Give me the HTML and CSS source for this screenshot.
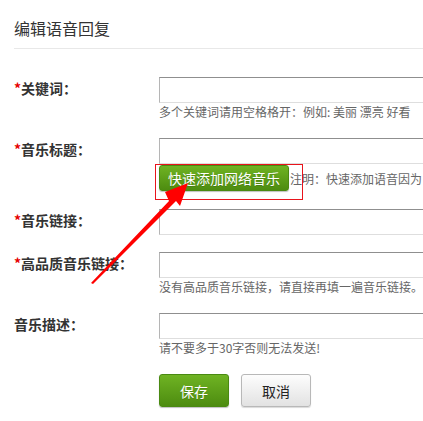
FILE: index.html
```html
<!DOCTYPE html>
<html lang="zh-CN">
<head>
<meta charset="utf-8">
<title>编辑语音回复</title>
<link rel="stylesheet" href="styles.css">
</head>
<body>
<div class="page">
  <h2 class="title">编辑语音回复</h2>
  <form class="form">
    <div class="row">
      <label class="label"><span class="req">*</span>关键词：</label>
      <div class="field">
        <input class="input" type="text">
        <p class="hint">多个关键词请用空格格开：例如: 美丽 漂亮 好看</p>
      </div>
    </div>
    <div class="row row-tools">
      <label class="label"><span class="req">*</span>音乐标题：</label>
      <div class="field">
        <input class="input" type="text">
        <div class="tools">
          <button type="button" class="btn btn-green btn-quick">快速添加网络音乐</button>
          <span class="note">注明：快速添加语音因为</span>
          <span class="mark"></span>
        </div>
      </div>
    </div>
    <div class="row">
      <label class="label"><span class="req">*</span>音乐链接：</label>
      <div class="field">
        <input class="input" type="text">
      </div>
    </div>
    <div class="row">
      <label class="label"><span class="req">*</span>高品质音乐链接：</label>
      <div class="field">
        <input class="input" type="text">
        <p class="hint">没有高品质音乐链接，请直接再填一遍音乐链接。</p>
      </div>
    </div>
    <div class="row">
      <label class="label">音乐描述：</label>
      <div class="field">
        <input class="input" type="text">
        <p class="hint">请不要多于30字否则无法发送!</p>
      </div>
    </div>
    <div class="row">
      <span class="label"></span>
      <div class="actions">
        <button type="button" class="btn btn-green btn-big">保存</button>
        <button type="button" class="btn btn-gray btn-big">取消</button>
      </div>
    </div>
  </form>
  <svg class="arrow" width="423" height="421" viewBox="0 0 423 421" aria-hidden="true">
    <polygon fill="#f00" points="91,283 169,201 165,192 188,183 180,206 176,201 93,284"/>
  </svg>
</div>
</body>
</html>
```

FILE: styles.css
```css
html, body {
  margin: 0;
  padding: 0;
  overflow: hidden;
  background: #fff;
}
body {
  font-family: "Noto Sans CJK SC", "Noto Sans", sans-serif;
  color: #333;
}
.page {
  position: relative;
  width: 423px;
  height: 421px;
  padding-left: 14px;
  box-sizing: border-box;
}
.title {
  margin: 0;
  padding-top: 16px;
  padding-bottom: 8px;
  font-size: 16px;
  line-height: 24px;
  font-weight: normal;
  color: #333;
  border-bottom: 1px solid #e8e8e8;
}
.form {
  margin-top: 28px;
}
.row {
  display: grid;
  grid-template-columns: 145px 1fr;
  margin-bottom: 17px;
}
.row-tools {
  margin-bottom: 18px;
}
.label {
  font-size: 14px;
  line-height: 22px;
  font-weight: bold;
  color: #333;
  white-space: nowrap;
}
.req {
  color: #e60000;
  font-weight: bold;
}
.field {
  min-width: 0;
}
.input {
  display: block;
  width: 300px;
  height: 26px;
  box-sizing: border-box;
  margin: 0;
  border: 1px solid;
  border-color: #8f8f8f #d4d4d4 #dedede #b5b5b5;
  background: #fff;
  outline: none;
}
.hint {
  margin: 0;
  font-size: 12px;
  line-height: 18px;
  color: #666;
  white-space: nowrap;
}
.tools {
  position: relative;
  display: flex;
  align-items: center;
  margin-top: 1px;
  height: 26px;
  white-space: nowrap;
}
.note {
  font-size: 12px;
  color: #666;
  margin-left: 1px;
}
.mark {
  position: absolute;
  left: -4px;
  top: -1px;
  width: 148px;
  height: 36px;
  box-sizing: border-box;
  border: 1px solid #e8141c;
}
.btn {
  font-family: "Noto Sans CJK SC", "Noto Sans", sans-serif;
  font-size: 14px;
  border-radius: 3px;
  cursor: pointer;
  padding: 0;
  flex-shrink: 0;
}
.btn-green {
  color: #fff;
  border: 1px solid #4a8a12;
  background: linear-gradient(#6fb323, #4d8c10);
  box-shadow: 0 1px 1px rgba(0,0,0,0.25);
  text-shadow: 0 1px 0 rgba(0,0,0,0.15);
}
.btn-gray {
  color: #222;
  border: 1px solid #b8b8b8;
  background: linear-gradient(#fdfdfd, #e2e2e2);
  box-shadow: 0 1px 1px rgba(0,0,0,0.15);
}
.btn-quick {
  width: 130px;
  height: 26px;
  line-height: 24px;
}
.actions {
  display: flex;
  gap: 12px;
}
.btn-big {
  width: 70px;
  height: 33px;
}
.arrow {
  position: absolute;
  left: 0;
  top: 0;
  pointer-events: none;
}
```
